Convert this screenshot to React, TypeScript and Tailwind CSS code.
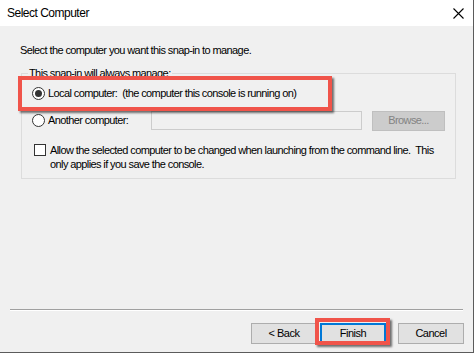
const font = "font-['Liberation_Sans',Arial,sans-serif]";

function Radio({ checked }: { checked?: boolean }) {
  return (
    <span className="flex h-[13px] w-[13px] shrink-0 items-center justify-center rounded-full border border-[#333333] bg-white">
      {checked && <span className="h-[7px] w-[7px] rounded-full bg-[#333333]" />}
    </span>
  );
}

function Button({ label, focused }: { label: string; focused?: boolean }) {
  return (
    <div
      className={
        "flex h-[21px] w-[66px] items-center justify-center border bg-[#e1e1e1] text-[11px] tracking-[-0.5px] text-black " +
        (focused ? "border-[#0078d7] shadow-[inset_0_0_0_1px_#0078d7]" : "border-[#adadad]")
      }
    >
      {label}
    </div>
  );
}

export default function App() {
  return (
    <div className={`relative h-[354px] w-[475px] overflow-hidden bg-white ${font}`}>
      <div className="flex h-[353px] w-[474px] flex-col border-r border-b border-[#5b5b5b] bg-[#f0f0f0]">
        {/* Title bar */}
        <div className="flex h-[26px] shrink-0 items-center justify-between bg-white pl-[7px] pr-[9px]">
          <span className="text-[12px] tracking-[-0.5px] text-black">Select Computer</span>
          <svg width="11" height="11" viewBox="0 0 11 11">
            <path d="M0.5 0.5 L10.5 10.5 M10.5 0.5 L0.5 10.5" stroke="#000" strokeWidth="1.1" />
          </svg>
        </div>

        {/* Body */}
        <div className="flex flex-col text-[11px] tracking-[-0.6px] text-black">
          <p className="mt-[17px] pl-[20px] leading-[14px]">
            Select the computer you want this snap-in to manage.
          </p>

          <div className="relative mt-[16px] ml-[21px] h-[106px] w-[435px] border border-[#dcdcdc] pl-[10px] pt-[12px]">
            <span className="absolute -top-[8px] left-[6px] bg-[#f0f0f0] px-[1px] leading-[14px]">
              This snap-in will always manage:
            </span>

            <div className="flex h-[14px] items-center gap-[3px]">
              <Radio checked />
              <span className="whitespace-pre">Local computer:  (the computer this console is running on)</span>
            </div>

            <div className="mt-[11px] flex h-[19px] items-center">
              <div className="flex w-[119px] items-center gap-[3px]">
                <Radio />
                <span>Another computer:</span>
              </div>
              <div className="h-[19px] w-[211px] border border-[#cccccc] bg-[#f0f0f0]" />
              <div className="ml-[10px] flex h-[20px] w-[73px] items-center justify-center border border-[#bfbfbf] bg-[#cccccc] text-[#838383]">
                Browse...
              </div>
            </div>

            <div className="mt-[13px] flex items-start gap-[4px] pl-[2px] leading-[14px]">
              <span className="mt-[1px] h-[12px] w-[12px] shrink-0 border border-[#333333] bg-white" />
              <span className="whitespace-pre">
                Allow the selected computer to be changed when launching from the command line.  This
                <br />
                only applies if you save the console.
              </span>
            </div>
          </div>

          <div className="mt-[130px] ml-[10px] w-[453px] border-t border-b border-t-[#a0a0a0] border-b-white" />

          <div className="mt-[12px] flex pl-[251px]">
            <Button label="< Back" />
            <div className="ml-[3px]">
              <Button label="Finish" focused />
            </div>
            <div className="ml-[12px]">
              <Button label="Cancel" />
            </div>
          </div>
        </div>
      </div>

      {/* Red annotation boxes */}
      <div className="absolute left-[18px] top-[76px] h-[35px] w-[314px] border-[4px] border-[#f0544a] shadow-[2px_2px_2px_rgba(0,0,0,0.55)]" />
      <div className="absolute left-[315px] top-[318px] h-[27px] w-[75px] border-[4px] border-[#f0544a] shadow-[2px_2px_2px_rgba(0,0,0,0.55)]" />
    </div>
  );
}
